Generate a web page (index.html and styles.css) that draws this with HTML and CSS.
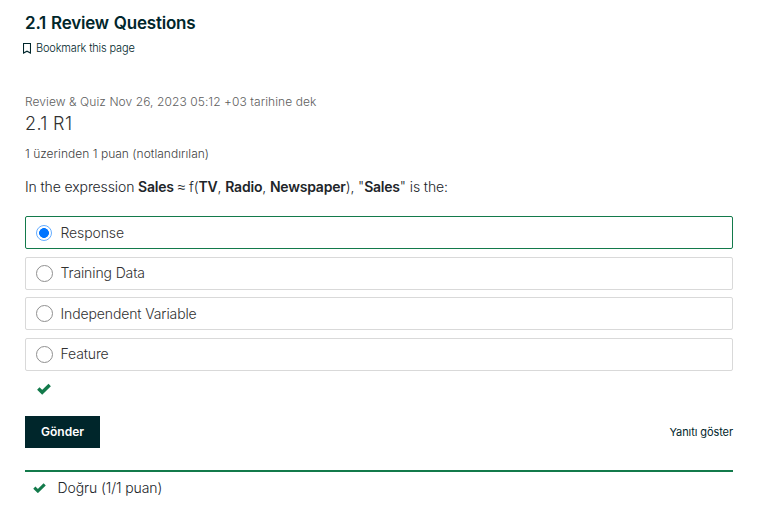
FILE: index.html
```html
<!DOCTYPE html>
<html lang="tr">
<head>
<meta charset="utf-8">
<title>2.1 Review Questions</title>
<link rel="stylesheet" href="styles.css">
</head>
<body>
<main class="page">
  <h1 class="title">2.1 Review Questions</h1>
  <button class="bookmark" type="button"><svg width="8" height="11" viewBox="0 0 8 11"><path d="M.5.5h7v9.6L4 8.2.5 10.1z" fill="none" stroke="#00262b" stroke-width="1.1"/></svg><span>Bookmark this page</span></button>
  <p class="due">Review &amp; Quiz Nov 26, 2023 05:12 +03 tarihine dek</p>
  <h2 class="problem-title">2.1 R1</h2>
  <p class="points">1 üzerinden 1 puan (notlandırılan)</p>
  <p class="question">In the expression <b>Sales</b> <span class="approx">≈</span> f(<b>TV</b>, <b>Radio</b>, <b>Newspaper</b>), "<b>Sales</b>" is the:</p>
  <div class="options">
    <label class="option correct"><input type="radio" name="answer" checked><span>Response</span></label>
    <label class="option"><input type="radio" name="answer"><span>Training Data</span></label>
    <label class="option"><input type="radio" name="answer"><span>Independent Variable</span></label>
    <label class="option"><input type="radio" name="answer"><span>Feature</span></label>
  </div>
  <svg class="check large" viewBox="0 0 14 11"><path d="M1.3 5 5.2 8.8 12.7 1.5" fill="none" stroke="#137a4b" stroke-width="3.4"/></svg>
  <div class="actions"><button class="submit" type="button">Gönder</button><button class="show" type="button">Yanıtı göster</button></div>
  <div class="result"><svg class="check" viewBox="0 0 14 11"><path d="M1.3 5 5.2 8.8 12.7 1.5" fill="none" stroke="#137a4b" stroke-width="3.4"/></svg><span>Doğru (1/1 puan)</span></div>
</main>
</body>
</html>
```
FILE: styles.css
```css
* { box-sizing: border-box; }
body { margin: 0; background: #fff; color: #212529; font-family: Inter, "Liberation Sans", sans-serif; }
h1, h2, p { margin: 0; }
button { border: 0; padding: 0; background: none; font-family: inherit; }
.page { padding: 12px 43px 0 25px; display: flex; flex-direction: column; }
.title { font-size: 17px; line-height: 22px; font-weight: 600; letter-spacing: -.2px; word-spacing: .8px; color: #00262b; }
.bookmark { display: flex; align-items: center; gap: 5px; height: 16px; margin: 6px 0 0 -2px; font-size: 11px; font-weight: 300; letter-spacing: -.16px; color: #00262b; }
.due { margin-top: 37px; font-size: 12px; line-height: 18px; font-weight: 300; letter-spacing: .08px; color: #5e5e5e; }
.problem-title { font-size: 18px; line-height: 24px; font-weight: 300; letter-spacing: .35px; color: #313131; margin-top: 1px; }
.points { margin-top: 9px; font-size: 12px; line-height: 18px; font-weight: 300; letter-spacing: .03px; color: #414141; }
.question { margin-top: 14px; font-size: 14px; line-height: 20px; font-weight: 300; letter-spacing: -.11px; }
.question b { font-weight: 600; letter-spacing: -.21px; }
.approx { font-family: "Liberation Sans", sans-serif; }
.options { display: flex; flex-direction: column; gap: 7.6px; margin-top: 19px; }
.option { display: flex; align-items: center; height: 33px; padding-left: 10px; gap: 7.5px; border: 1px solid #d9d9d9; border-radius: 2px; font-size: 14px; line-height: 17px; font-weight: 300; letter-spacing: -.12px; color: #313131; }
.option span { margin-bottom: .8px; }
.option.correct { border-color: #137a4b; }
.option input { appearance: none; width: 17px; height: 17px; margin: 0; border: 1px solid #8f8f8f; border-radius: 50%; }
.option input:checked { width: 16px; height: 16px; margin-right: 1px; border-color: #65adff; background: radial-gradient(circle, #0075ff 4.6px, transparent 5.2px); }
.check { width: 13px; height: 10px; }
.check.large { width: 14px; height: 12px; margin: 12px 0 0 12px; }
.actions { display: flex; align-items: center; justify-content: space-between; margin-top: 21px; }
.submit { width: 75px; height: 32px; background: #00262b; color: #fff; font-size: 12px; font-weight: 600; padding-bottom: 1px; }
.show { font-size: 11px; color: #00262b; letter-spacing: -.08px; }
.result { display: flex; align-items: center; gap: 11.5px; margin-top: 22px; padding: 6px 0 0 8px; border-top: 2px solid #137a4b; font-size: 14px; line-height: 20px; font-weight: 300; letter-spacing: -.09px; color: #212529; }
```
